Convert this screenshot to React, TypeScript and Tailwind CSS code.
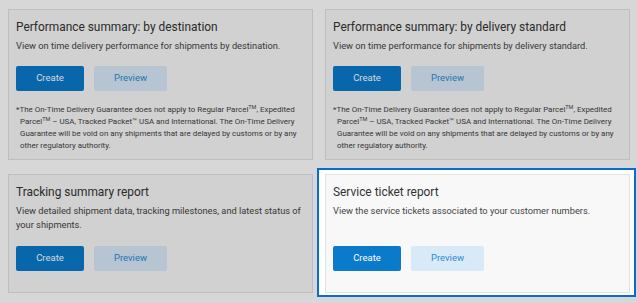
import React from 'react';

type Rapor = {
  baslik: string;
  aciklama: string;
  dipnot?: boolean;
  secili?: boolean;
};

const RAPORLAR: Rapor[] = [
  {
    baslik: 'Performance summary: by destination',
    aciklama: 'View on time delivery performance for shipments by destination.',
    dipnot: true,
  },
  {
    baslik: 'Performance summary: by delivery standard',
    aciklama: 'View on time performance for shipments by delivery standard.',
    dipnot: true,
  },
  {
    baslik: 'Tracking summary report',
    aciklama: 'View detailed shipment data, tracking milestones, and latest status of your shipments.',
  },
  {
    baslik: 'Service ticket report',
    aciklama: 'View the service tickets associated to your customer numbers.',
    secili: true,
  },
];

function Tm() {
  return <span className="relative -top-[3px] text-[5.5px] leading-none">TM</span>;
}

function Dipnot() {
  return (
    <p className="mt-[13px] pl-[4px] -indent-[4px] text-[7.95px] leading-[12px] text-[#444]">
      *The On-Time Delivery Guarantee does not apply to Regular Parcel<Tm />, Expedited
      Parcel<Tm /> – USA, Tracked Packet™ USA and International. The On-Time Delivery
      Guarantee will be void on any shipments that are delayed by customs or by any other regulatory authority.
    </p>
  );
}

function RaporKarti({ r }: { r: Rapor }) {
  return (
    <div className="relative flex">
      <div className="flex w-full flex-col border border-[#e2e2e2] bg-[#f8f8f8] px-[7px] pt-[9px] pb-[7px]">
        <h3 className="text-[11.9px] leading-[16px] text-[#333]">{r.baslik}</h3>
        <p className="mt-[4px] text-[9.25px] leading-[14px] text-[#444]">{r.aciklama}</p>
        <div className={`flex gap-[10px] ${r.dipnot ? 'mt-[13px]' : 'mt-auto pt-[14px] pb-[14px]'}`}>
          <button className="h-[25px] w-[68px] rounded-[2px] bg-[#0a7acb] text-[9.5px] text-white">Create</button>
          <button className="h-[25px] w-[73px] rounded-[2px] bg-[#d8eaf8] text-[9.5px] text-[#2b8bd3]">Preview</button>
        </div>
        {r.dipnot && <Dipnot />}
      </div>
      {/* tur vurgusu */}
      {r.secili && (
        <div className="pointer-events-none absolute -top-[6px] -bottom-[4px] -left-[8px] -right-[6px] border-2 border-[#0b6bcb] shadow-[0_0_0_3000px_rgba(0,0,0,0.155)]" />
      )}
    </div>
  );
}

export default function App() {
  return (
    <div className="min-h-[303px] bg-white pl-[8px] pr-[7px] pt-[9px] font-['Roboto',sans-serif]">
      <div className="grid grid-cols-2 gap-x-[12px] gap-y-[14px]">
        {RAPORLAR.map(r => (
          <RaporKarti key={r.baslik} r={r} />
        ))}
      </div>
    </div>
  );
}
